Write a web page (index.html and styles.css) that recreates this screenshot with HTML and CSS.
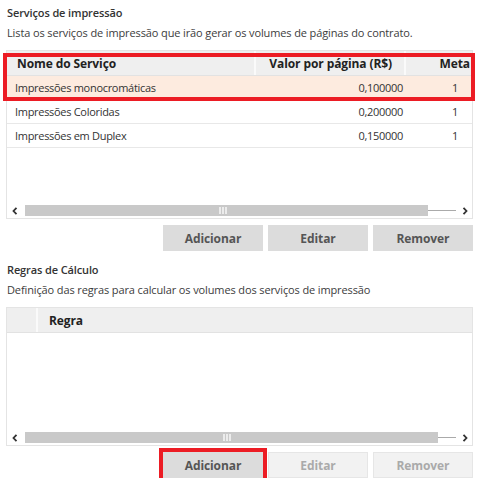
FILE: index.html
```html
<!DOCTYPE html>
<html lang="pt">
<head>
<meta charset="utf-8">
<link rel="stylesheet" href="styles.css">
</head>
<body>
<div class="page">
  <section class="section">
    <h2 class="title">Serviços de impressão</h2>
    <p class="desc">Lista os serviços de impressão que irão gerar os volumes de páginas do contrato.</p>
    <div class="grid grid-services">
      <div class="head">
        <div class="hcell c-name">Nome do Serviço</div>
        <div class="hcell c-value">Valor por página (R$)</div>
        <div class="hcell c-meta">Meta</div>
      </div>
      <div class="row selected">
        <div class="cell c-name">Impressões monocromáticas</div>
        <div class="cell c-value">0,100000</div>
        <div class="cell c-meta">1</div>
      </div>
      <div class="row">
        <div class="cell c-name">Impressões Coloridas</div>
        <div class="cell c-value">0,200000</div>
        <div class="cell c-meta">1</div>
      </div>
      <div class="row">
        <div class="cell c-name">Impressões em Duplex</div>
        <div class="cell c-value">0,150000</div>
        <div class="cell c-meta">1</div>
      </div>
      <div class="fill"></div>
      <div class="hscroll">
        <svg class="arrow arrow-left" width="6" height="8" viewBox="0 0 6 8"><path d="M4.5 0.8 L1.5 4 L4.5 7.2" fill="none" stroke="#333" stroke-width="1.8"/></svg>
        <div class="track">
          <div class="thumb"><span class="grip"></span></div>
          <div class="rail"></div>
        </div>
        <svg class="arrow arrow-right" width="6" height="8" viewBox="0 0 6 8"><path d="M1.5 0.8 L4.5 4 L1.5 7.2" fill="none" stroke="#333" stroke-width="1.8"/></svg>
      </div>
      <div class="mark mark-header"></div>
    </div>
    <div class="buttons">
      <button class="btn">Adicionar</button>
      <button class="btn">Editar</button>
      <button class="btn">Remover</button>
    </div>
  </section>

  <section class="section section-rules">
    <h2 class="title">Regras de Cálculo</h2>
    <p class="desc">Definição das regras para calcular os volumes dos serviços de impressão</p>
    <div class="grid grid-rules">
      <div class="head">
        <div class="hcell c-sel"></div>
        <div class="hcell c-rule">Regra</div>
      </div>
      <div class="fill"></div>
      <div class="hscroll">
        <svg class="arrow arrow-left" width="6" height="8" viewBox="0 0 6 8"><path d="M4.5 0.8 L1.5 4 L4.5 7.2" fill="none" stroke="#333" stroke-width="1.8"/></svg>
        <div class="track">
          <div class="thumb thumb-rules"><span class="grip"></span></div>
          <div class="rail"></div>
        </div>
        <svg class="arrow arrow-right" width="6" height="8" viewBox="0 0 6 8"><path d="M1.5 0.8 L4.5 4 L1.5 7.2" fill="none" stroke="#333" stroke-width="1.8"/></svg>
      </div>
    </div>
    <div class="buttons">
      <button class="btn btn-marked">Adicionar<span class="mark mark-btn"></span></button>
      <button class="btn" disabled>Editar</button>
      <button class="btn" disabled>Remover</button>
    </div>
  </section>
</div>
</body>
</html>
```

FILE: styles.css
```css
* { box-sizing: border-box; }
html, body { margin: 0; padding: 0; background: #fff; }
body {
  font-family: "Open Sans", "Noto Sans", "Liberation Sans", sans-serif;
  font-size: 11px;
  letter-spacing: -0.12px;
  color: #333;
}
.page { padding: 5px 11px 0 6px; }
.section { display: flex; flex-direction: column; }
.title {
  margin: 0 0 0 1px;
  font-size: 11px;
  font-weight: 600;
  line-height: 16px;
  color: #333;
}
.desc {
  margin: 4px 0 0 1px;
  line-height: 16px;
  color: #3c3c3c;
}
.grid {
  position: relative;
  margin-top: 9px;
  border: 1px solid #e4e4e4;
  display: flex;
  flex-direction: column;
}
.grid-services { height: 169px; }
.grid-rules { height: 139px; }
.head {
  display: flex;
  height: 25px;
  background: #efefef;
  border-bottom: 1px solid #e2e2e2;
}
.hcell {
  font-weight: 700;
  font-size: 12px;
  letter-spacing: -0.1px;
  color: #222;
  padding-top: 5px;
  line-height: 16px;
  border-right: 2px solid #fafafa;
}
.hcell:last-child { border-right: none; }
.row {
  display: flex;
  height: 24px;
  border-bottom: 1px solid #e8e8e8;
  align-items: center;
}
.row.selected { background: #fdebdf; }
.cell { line-height: 16px; letter-spacing: -0.3px; }
.c-name { width: 249px; padding-left: 8px; }
.hcell.c-name { padding-left: 10px; }
.c-value { width: 150px; text-align: right; padding-right: 3px; }
.hcell.c-value { padding-right: 12px; }
.c-meta { flex: 1; text-align: right; padding-right: 14px; }
.hcell.c-meta { padding-right: 2px; }
.c-sel { width: 31px; }
.c-rule { flex: 1; padding-left: 11px; }
.fill { flex: 1; }
.hscroll {
  display: flex;
  align-items: center;
  height: 11px;
  margin-bottom: 2px;
  padding: 0 4px 0 5px;
}
.arrow { display: block; flex: none; }
.arrow-left { margin-right: 7px; }
.arrow-right { margin-left: 6px; }
.track {
  flex: 1;
  display: flex;
  align-items: center;
  height: 11px;
}
.thumb {
  width: 403px;
  height: 11px;
  background: #c9c9c9;
  display: flex;
  align-items: center;
  justify-content: center;
  padding-right: 8px;
}
.thumb-rules { width: 413px; padding-right: 10px; }
.grip {
  width: 8px;
  height: 7px;
  background: repeating-linear-gradient(90deg, #ececec 0 2px, transparent 2px 3px);
}
.rail {
  flex: 1;
  height: 1px;
  background: #aaa;
}
.buttons {
  display: flex;
  justify-content: flex-end;
  gap: 5px;
  margin-top: 6px;
}
.btn {
  position: relative;
  width: 100px;
  height: 26px;
  border: 1px solid #dcdcdc;
  background: #dcdcdc;
  font-family: inherit;
  font-size: 12px;
  font-weight: 700;
  letter-spacing: -0.1px;
  color: #555;
  padding: 0;
}
.btn:disabled {
  background: #f2f2f2;
  border-color: #e6e6e6;
  color: #aaa;
}
.section-rules { margin-top: 11px; }
.mark {
  position: absolute;
  border: 4px solid #ec1c24;
  pointer-events: none;
}
.mark-header { left: -4px; right: -3px; top: 2px; height: 48px; }
.mark-btn { left: -5px; right: -5px; top: -5px; bottom: -5px; }
```
